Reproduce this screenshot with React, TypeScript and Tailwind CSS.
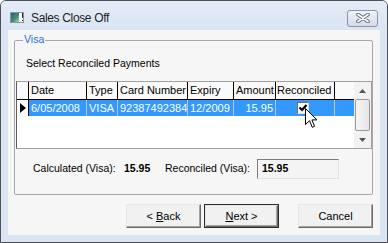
import React from 'react';

const font = "font-['Liberation_Sans',Arial,sans-serif]";

const TitleIcon = () => (
  <svg width="15" height="12" viewBox="0 0 15 12">
    <defs>
      <linearGradient id="tg" x1="0" y1="0" x2="1" y2="1">
        <stop offset="0" stopColor="#2a5f7c" />
        <stop offset="0.55" stopColor="#3e8c70" />
        <stop offset="1" stopColor="#a8d6c0" />
      </linearGradient>
    </defs>
    <rect x="0.5" y="0.5" width="13" height="10" fill="#fff" stroke="#8a939e" />
    <rect x="1" y="1" width="8" height="9" fill="url(#tg)" />
    <rect x="12" y="1" width="1" height="5" fill="#222" />
    <rect x="12" y="8" width="1" height="1" fill="#222" />
  </svg>
);

const CloseGlyph = () => (
  <svg width="14" height="10" viewBox="0 0 14 10">
    <path d="M2 1.5 L12 8.5 M12 1.5 L2 8.5" stroke="#5d6675" strokeWidth="3.6" strokeLinecap="round" />
    <path d="M2 1.5 L12 8.5 M12 1.5 L2 8.5" stroke="#fff" strokeWidth="1.8" strokeLinecap="round" />
  </svg>
);

const Cursor = () => (
  <svg width="13" height="21" viewBox="0 0 13 21" className="absolute left-[305px] top-[108px]">
    <path d="M0.5 0.5 V16.5 L4.5 12.7 L7.3 19.3 L9.6 18.3 L6.9 11.9 H11.9 Z" fill="#fff" stroke="#000" strokeWidth="1" strokeLinejoin="miter" />
  </svg>
);

const Btn: React.FC<{ children: React.ReactNode; def?: boolean; className?: string }> = ({ children, def, className }) => (
  <div className={`h-[24px] w-[75px] ${def ? 'border border-[#2b2b2b]' : ''} ${className ?? ''}`}>
    <div className="h-full w-full border-t border-l border-[#e6e6e6] border-r border-b border-r-[#6a6a6a] border-b-[#6a6a6a]">
      <div className="flex h-full w-full items-center justify-center bg-[#f1f1f1] shadow-[inset_-1px_-1px_0_#a3a3a3] text-[11px] text-black">
        {children}
      </div>
    </div>
  </div>
);

const cols = [
  { label: 'Date', w: 'w-[58px]', value: '6/05/2008' },
  { label: 'Type', w: 'w-[31px]', value: 'VISA' },
  { label: 'Card Number', w: 'w-[70px]', value: '92387492384' },
  { label: 'Expiry', w: 'w-[46px]', value: '12/2009' },
  { label: 'Amount', w: 'w-[42px]', value: '15.95', right: true },
];

export default function App() {
  return (
    <div className={`${font} relative h-[243px] w-[388px] overflow-hidden`}>
      <div className="flex h-full w-full flex-col rounded-t-[6px] border border-[#4c4f55] bg-[#d9e5f3]">
        {/* title bar */}
        <div className="flex h-[29px] shrink-0 items-center pt-[5px] pl-[9px] pr-[9px] bg-gradient-to-b from-[#e4ecf6] to-[#d9e5f3] rounded-t-[5px]">
          <TitleIcon />
          <span className="ml-[6px] text-[12px] tracking-[-0.35px] text-[#1e1e1e]">Sales Close Off</span>
          <div className="ml-auto flex h-[17px] w-[31px] items-center justify-center rounded-[3px] border border-[#8c96a6] bg-gradient-to-b from-[#f1f4f9] to-[#d3dbe6]">
            <CloseGlyph />
          </div>
        </div>

        {/* client */}
        <div className="mx-[7px] h-[205px] shrink-0 bg-[#f6f6f6] text-[10.5px] text-black">
          <div className="relative ml-[6px] mt-[10px] h-[155px] w-[359px] rounded-[2px] border border-[#a8a8a8]">
            <span className="absolute left-[8px] top-[-8px] bg-[#f6f6f6] px-[1px] text-[10.5px] leading-[13px] text-[#2a6dd6]">Visa</span>
            <div className="mt-[16px] pl-[11px] leading-[13px]">Select Reconciled Payments</div>

            {/* grid */}
            <div className="ml-[1px] mt-[11px] flex h-[68px] w-[356px] border border-[#a0a0a0] border-l-[#5e5e5e] bg-white text-[11px]">
              <div className="flex w-[337px] flex-col">
                <div className="flex h-[18px] border-b border-black bg-[#fafafa]">
                  <div className="w-[12px] border-r border-black" />
                  {cols.map((c) => (
                    <div key={c.label} className={`${c.w} border-r border-black pl-[2px] leading-[17px] whitespace-nowrap overflow-hidden`}>
                      {c.label}
                    </div>
                  ))}
                  <div className="w-[59px] border-r border-black pl-[1px] leading-[17px] whitespace-nowrap">Reconciled</div>
                  <div className="w-[19px]" />
                </div>
                <div className="flex h-[16px]">
                  <div className="flex w-[12px] items-center border-r border-black bg-white pl-[3px]">
                    <svg width="7" height="10" viewBox="0 0 7 10"><path d="M0 0 L6 5 L0 10 Z" fill="#000" /></svg>
                  </div>
                  {cols.map((c) => (
                    <div
                      key={c.label}
                      className={`${c.w} border-r border-[#b9c8db] bg-[#3399ff] text-white leading-[16px] whitespace-nowrap overflow-hidden ${c.right ? 'pr-[2px] text-right' : 'pl-[2px]'}`}
                    >
                      {c.value}
                    </div>
                  ))}
                  <div className="flex w-[59px] items-center border-r border-[#b9c8db] bg-[#3399ff] pl-[21px]">
                    <div className="flex h-[12px] w-[12px] items-center justify-center border border-t-[#6f6f6f] border-l-[#6f6f6f] border-r-[#e0e0e0] border-b-[#e0e0e0] bg-white">
                      <svg width="10" height="10" viewBox="0 0 10 10"><path d="M1.5 4.5 L4 7 L8.5 2" fill="none" stroke="#000" strokeWidth="2.2" /></svg>
                    </div>
                  </div>
                  <div className="w-[19px] bg-[#3399ff]" />
                </div>
              </div>
              {/* scrollbar */}
              <div className="flex w-[17px] flex-col items-center bg-[#f2f2f2]">
                <div className="flex h-[17px] w-full items-center justify-center">
                  <svg width="7" height="4" viewBox="0 0 7 4"><path d="M0 4 L3.5 0 L7 4 Z" fill="#555" /></svg>
                </div>
                <div className="h-[32px] w-[15px] rounded-[2px] border border-[#9a9a9a] bg-gradient-to-r from-[#f6f6f6] to-[#e6e6e6]" />
                <div className="flex flex-1 w-full items-center justify-center">
                  <svg width="7" height="4" viewBox="0 0 7 4"><path d="M0 0 L3.5 4 L7 0 Z" fill="#555" /></svg>
                </div>
              </div>
            </div>

            {/* totals */}
            <div className="mt-[10px] flex h-[20px] items-center pl-[18px] whitespace-nowrap">
              <span className="w-[91px]">Calculated (Visa):</span>
              <span className="w-[41px] font-bold">15.95</span>
              <span className="w-[92px]">Reconciled (Visa):</span>
              <div className="flex h-[20px] w-[82px] items-center border border-t-[#7c7c7c] border-l-[#7c7c7c] border-r-[#e2e2e2] border-b-[#e2e2e2] bg-[#f4f4f4] pl-[4px] font-bold">
                15.95
              </div>
            </div>
          </div>

          {/* buttons */}
          <div className="mt-[9px] flex pr-[7px] justify-end">
            <Btn><span>&lt; <u>B</u>ack</span></Btn>
            <Btn def className="ml-[3px]"><span><u>N</u>ext &gt;</span></Btn>
            <Btn className="ml-[19px]"><span>Cancel</span></Btn>
          </div>
        </div>
      </div>
      <Cursor />
    </div>
  );
}
